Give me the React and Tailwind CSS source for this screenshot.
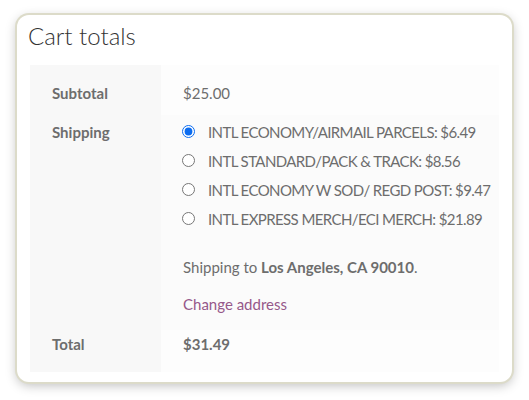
const methods = [
  { id: 'airmail', label: 'INTL ECONOMY/AIRMAIL PARCELS: $6.49', checked: true },
  { id: 'pack', label: 'INTL STANDARD/PACK & TRACK: $8.56' },
  { id: 'sod', label: 'INTL ECONOMY W SOD/ REGD POST: $9.47' },
  { id: 'express', label: 'INTL EXPRESS MERCH/ECI MERCH: $21.89' },
];

export default function App() {
  return (
    <div
      className="h-[400px] w-[529px] bg-white pl-[17px] pt-[15px]"
      style={{ fontFamily: 'Lato, "Open Sans", sans-serif' }}
    >
      <div className="h-[367px] w-[495px] rounded-[12px] bg-white px-[13px] shadow-[0_0_0_2px_#dcdbc9,0_3px_12px_rgba(0,0,0,0.28)]">
        <h2 className="-ml-[2px] pt-[5px] text-[24px] font-light leading-[32px] text-[#333]">Cart totals</h2>
        <div className="mt-[13px] grid grid-cols-[131px_1fr] text-[15px] leading-[24px] text-[#6d6d6d]">
          <div className="h-[50px] bg-[#f8f8f8] pl-[22px] pt-[16px] font-bold">Subtotal</div>
          <div className="h-[50px] bg-[#fdfdfd] pl-[22px] pt-[16px]">$25.00</div>

          <div className="h-[215px] bg-[#f8f8f8] pl-[22px] pt-[5px] font-bold">Shipping</div>
          <div className="h-[215px] bg-[#fbfbfb] pl-[21px] pt-[2px]">
            <ul>
              {methods.map((m) => (
                <li key={m.id} className="flex h-[29px] items-center">
                  <input
                    type="radio"
                    name="shipping"
                    defaultChecked={m.checked}
                    className="m-0 h-[13px] w-[13px] shrink-0 accent-[#0b6cf0]"
                  />
                  <label className="ml-[13px] whitespace-nowrap tracking-[-0.6px]">{m.label}</label>
                </li>
              ))}
            </ul>
            <p className="mt-[22px] pl-[1px]">
              Shipping to <strong>Los Angeles, CA 90010</strong>.
            </p>
            <a href="#" className="mt-[13px] block pl-[1px] text-[#96588a]">
              Change address
            </a>
          </div>

          <div className="h-[42px] bg-[#f8f8f8] pl-[22px] pt-[2px] font-bold">Total</div>
          <div className="h-[42px] bg-[#fdfdfd] pl-[22px] pt-[2px] font-bold">$31.49</div>
        </div>
      </div>
    </div>
  );
}
